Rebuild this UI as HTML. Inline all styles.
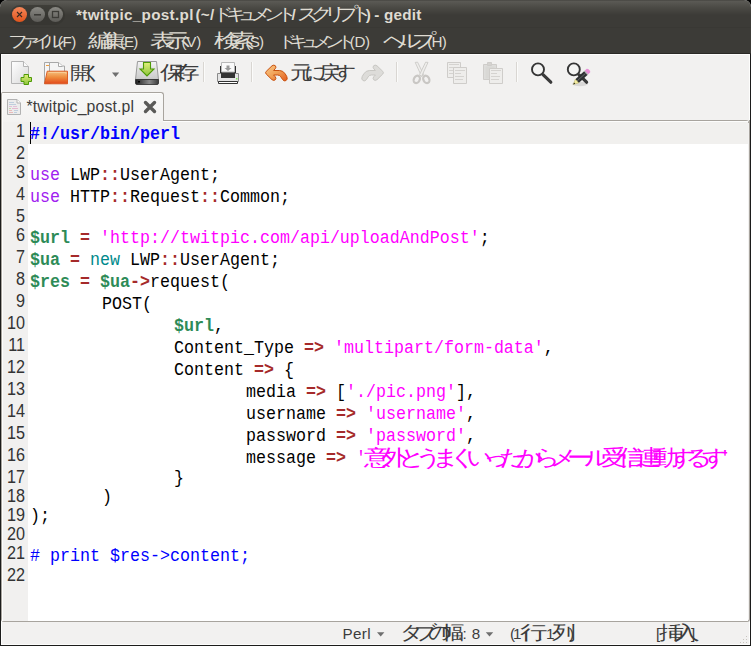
<!DOCTYPE html>
<html><head><meta charset="utf-8">
<style>
html,body{margin:0;padding:0;}
body{width:751px;height:646px;background:#000;position:relative;overflow:hidden;font-family:"Liberation Sans",sans-serif;}
.a{position:absolute;}
.u{position:absolute;white-space:nowrap;line-height:20px;}
.j{font-family:"Liberation Sans",sans-serif;font-weight:normal;line-height:0;}
#win{left:0;top:0;width:751px;height:646px;border-radius:7px 7px 0 0;overflow:hidden;background:#f2f1f0;}
#title{left:0;top:0;width:751px;height:28px;background:linear-gradient(#3f3e3a 0px,#5b5a55 1px,#4a4944 8px,#3c3b37 15px,#3c3b37 27px,#363531 28px);}
#menubar{left:0;top:28px;width:751px;height:26px;background:linear-gradient(#3c3b37 25px,#2a2926 25px);}
#toolbar{left:1px;top:54px;width:749px;height:66px;background:#f2f1f0;}
#status{left:1px;top:622px;width:749px;height:23px;background:#f2f1f0;}
.sep{position:absolute;width:1px;height:20px;background:#d9d6d2;border-right:1px solid #fbfbfa;top:62px;}
.ln{position:absolute;left:0;width:25px;text-align:right;font-family:"Liberation Sans",sans-serif;font-size:16.2px;color:#333;line-height:19px;transform:scaleY(1.12);transform-origin:0 15px;}
.cl{position:absolute;left:30px;font-family:"Liberation Mono",monospace;font-size:16.66px;color:#000;white-space:pre;tab-size:72px;line-height:19px;transform:scaleY(1.13);transform-origin:0 14px;}
.k{color:#0000ff;font-weight:bold}
.p{color:#a020f0}
.o{color:#a52a2a;font-weight:bold}
.v{color:#2e8b57;font-weight:bold}
.s{color:#ff00ff}
.b{color:#008a8c}
.c{color:#0000ff}

.jw{position:absolute;left:0;white-space:nowrap;font-family:"Liberation Sans",sans-serif;}
.jw span{position:absolute;top:0;transform-origin:0 0;font-weight:normal;}

</style></head><body>
<div id="win" class="a"><div id="title" class="a"></div><div id="menubar" class="a"></div><div id="toolbar" class="a"></div><div id="status" class="a"></div></div>
<div class="sep" style="left:203px"></div>
<div class="sep" style="left:251px"></div>
<div class="sep" style="left:396px"></div>
<div class="sep" style="left:516px"></div>
<div class="a" style="left:0;top:54px;width:1px;height:592px;background:#1c1c1b;"></div>
<div class="a" style="left:1px;top:54px;width:1px;height:591px;background:#fdfdfc;"></div>
<div class="a" style="left:750px;top:54px;width:1px;height:592px;background:#1c1c1b;"></div>
<div class="a" style="left:749px;top:54px;width:1px;height:591px;background:#fdfdfc;"></div>
<div class="a" style="left:0;top:645px;width:751px;height:1px;background:#1c1c1b;"></div>
<div class="a" style="left:1px;top:54px;width:749px;height:1px;background:#fdfdfc;"></div>
<div class="a" style="left:1px;top:644px;width:749px;height:1px;background:#fdfdfc;"></div>
<!-- tab -->
<div class="a" style="left:1px;top:92px;width:161px;height:30px;border:1px solid #a8a49e;border-bottom:none;border-radius:2px 3px 0 0;background:linear-gradient(#f8f8f7,#f3f2f1);box-shadow:inset 1px 1px 0 #fdfdfc;"></div>
<!-- notebook frame -->
<div class="a" style="left:1px;top:120px;width:747px;height:501px;border:1px solid #a8a49e;border-top:none;border-radius:0 0 3px 3px;"></div>
<div class="a" style="left:163px;top:120px;width:583px;height:1px;background:#a8a49e;"></div>
<div class="a" style="left:746px;top:120px;width:3px;height:3px;border-top:1px solid #a8a49e;border-right:1px solid #a8a49e;border-radius:0 3px 0 0;box-sizing:border-box;background:#fdfdfc"></div>
<div class="a" style="left:163px;top:121px;width:585px;height:1px;background:#fdfdfc;"></div>
<div class="a" style="left:2px;top:122px;width:746px;height:499px;background:#fff;"></div>
<div class="a" style="left:2px;top:122px;width:1px;height:497px;background:#fdfdfc;"></div>
<div class="a" style="left:3px;top:122px;width:25px;height:499px;background:#f1f0ef;"></div>
<div class="a" style="left:28px;top:122px;width:720px;height:22px;background:#f1f0ee;"></div>
<div class="a" style="left:30px;top:122px;width:1px;height:22px;background:#000;"></div>
<svg class="a" style="left:0;top:0" width="751" height="646" viewBox="0 0 751 646">
<defs>
 <linearGradient id="gClose" x1="0" y1="0" x2="0" y2="1"><stop offset="0" stop-color="#f5875a"/><stop offset="1" stop-color="#e0541c"/></linearGradient>
 <linearGradient id="gGrey" x1="0" y1="0" x2="0" y2="1"><stop offset="0" stop-color="#8a8984"/><stop offset="1" stop-color="#5c5b57"/></linearGradient>
 <linearGradient id="gPage" x1="0" y1="0" x2="1" y2="1"><stop offset="0" stop-color="#ffffff"/><stop offset="1" stop-color="#d8d8d8"/></linearGradient>
 <linearGradient id="gGreen" x1="0" y1="0" x2="0" y2="1"><stop offset="0" stop-color="#e0ef7a"/><stop offset="1" stop-color="#8cc43c"/></linearGradient>
 <linearGradient id="gOrange" x1="0" y1="0" x2="0" y2="1"><stop offset="0" stop-color="#f6c27e"/><stop offset="0.5" stop-color="#ee8a3c"/><stop offset="1" stop-color="#e2481a"/></linearGradient>
 <linearGradient id="gUndo" x1="0" y1="0" x2="1" y2="1"><stop offset="0" stop-color="#fac98a"/><stop offset="0.5" stop-color="#f0a055"/><stop offset="1" stop-color="#e45a1c"/></linearGradient>
 <linearGradient id="gDrive" x1="0" y1="0" x2="0" y2="1"><stop offset="0" stop-color="#f4f4f4"/><stop offset="1" stop-color="#c8c8c8"/></linearGradient>
 <linearGradient id="gDriveB" x1="0" y1="0" x2="1" y2="0"><stop offset="0" stop-color="#1e1e1e"/><stop offset="0.6" stop-color="#8a8a8a"/><stop offset="1" stop-color="#3a3a3a"/></linearGradient>
</defs>
<!-- title buttons -->
<rect x="10" y="5" width="55" height="20" rx="10" fill="#34332f" opacity="0.6"/>
<circle cx="19.5" cy="14.5" r="7.5" fill="url(#gClose)"/>
<path d="M17,12 L22,17 M22,12 L17,17" stroke="#3a2a22" stroke-width="1.1"/>
<circle cx="37.5" cy="14.5" r="7.5" fill="url(#gGrey)"/>
<rect x="34" y="14" width="7" height="1.6" fill="#3c3b37"/>
<circle cx="55.5" cy="14.5" r="7.5" fill="url(#gGrey)"/>
<rect x="52.5" y="11.5" width="6" height="6" fill="none" stroke="#3c3b37" stroke-width="1.3"/>

<!-- new doc -->
<path d="M11.5,61.5 H23.5 L28.5,66.5 V83.5 H11.5 Z" fill="url(#gPage)" stroke="#b4b4b4"/>
<path d="M23.5,61.5 V66.5 H28.5" fill="#fafafa" stroke="#b4b4b4"/>
<path d="M24,74.5 H28.5 V77.5 H31.5 V81.5 H28.5 V84.5 H24 V81.5 H21 V77.5 H24 Z" fill="url(#gGreen)" stroke="#4e9a06"/>

<!-- open -->
<path d="M44.5,62.5 H51 V83.5 H44.5 Z" fill="#f6f6f6" stroke="#a8a8a8"/>
<rect x="46" y="65" width="3" height="1" fill="#f0a040"/>
<path d="M49.5,62.5 H58.5 L62.5,66 H64.5 V75 H49.5 Z" fill="#f4f4f4" stroke="#a8a8a8"/>
<path d="M58.5,62.5 V66.5 H62.5" fill="#fff" stroke="#a8a8a8"/>
<path d="M47.2,71.2 H67.5 V83.8 H44.5 Z" fill="url(#gOrange)" stroke="#d9541a" stroke-width="0.9"/>
<path d="M48.5,72.5 H66 V74" fill="none" stroke="#fbd9a8" stroke-width="0.8" opacity="0.8"/>

<!-- dropdown arrow -->
<path d="M112,72.5 H119.2 L115.6,77 Z" fill="#6f6f6f"/>

<!-- save (drive) -->
<path d="M137.5,61.5 H156.5 L158.5,79.5 H135.5 Z" fill="url(#gDrive)" stroke="#9a9a9a"/>
<ellipse cx="147" cy="72" rx="8" ry="5" fill="none" stroke="#d6d6d6"/>
<path d="M135.5,79.5 H158.5 V83 Q158.5,84.5 157,84.5 H137 Q135.5,84.5 135.5,83 Z" fill="url(#gDriveB)" stroke="#2a2a2a" stroke-width="0.8"/>
<rect x="138" y="81" width="2" height="1.5" fill="#000"/>
<path d="M143.5,62.5 H150.5 V69 H154 L147,76 L140,69 H143.5 Z" fill="url(#gGreen)" stroke="#4e9a06" stroke-width="1.1"/>

<!-- printer -->
<rect x="220" y="66" width="16" height="7" fill="#2e2e2e"/>
<path d="M221.5,62.5 H234.5 V72 H221.5 Z" fill="#fafafa" stroke="#b8b8b8"/>
<path d="M226.5,65.5 H229.5 V68 H231.5 L228,71 L224.5,68 H226.5 Z" fill="#9a9a9a"/>
<path d="M217.5,73.5 H238.5 V81.5 H217.5 Z" fill="#e4e4e4" stroke="#8a8a8a"/>
<rect x="221" y="73" width="14" height="5" fill="#333"/>
<rect x="236" y="78" width="1.5" height="1.5" fill="#7ee05a"/>
<path d="M218.5,81.5 H237.5 V83.5 H218.5 Z" fill="#fff" stroke="#333"/>

<!-- undo -->
<path d="M266.2,71.4 L272,65.8 Q274,64.4 275.4,65.8 Q276.6,67.2 275.2,68.8 L273.6,70.5 H279.6 Q283.2,70.5 285.3,74 L286.8,76.6 Q288,79.4 286,80.6 Q284,81.6 282.6,79.6 L280.8,76.8 Q279.6,75 277.6,75 H273.6 L275.2,76.7 Q276.6,78.3 275.4,79.7 Q274,81.1 272,79.7 L266.2,74 Q264.9,72.7 266.2,71.4 Z" fill="url(#gUndo)" stroke="#c9510f" stroke-width="1" stroke-linejoin="round"/>
<!-- redo disabled -->
<path d="M382.8,71.4 L377,65.8 Q375,64.4 373.6,65.8 Q372.4,67.2 373.8,68.8 L375.4,70.5 H369.4 Q365.8,70.5 363.7,74 L362.2,76.6 Q361,79.4 363,80.6 Q365,81.6 366.4,79.6 L368.2,76.8 Q369.4,75 371.4,75 H375.4 L373.8,76.7 Q372.4,78.3 373.6,79.7 Q375,81.1 377,79.7 L382.8,74 Q384.1,72.7 382.8,71.4 Z" fill="#dddcd9" stroke="#c8c7c3" stroke-width="1" stroke-linejoin="round"/>
<!-- scissors disabled -->
<path d="M415.2,62.4 L417.6,62.2 L423.6,74.6 L421.6,76.4 Z" fill="#efeeec" stroke="#cbc9c6" stroke-width="0.9" stroke-linejoin="round"/>
<path d="M428,62.4 L425.6,62.2 L419.6,74.6 L421.6,76.4 Z" fill="#efeeec" stroke="#cbc9c6" stroke-width="0.9" stroke-linejoin="round"/>
<g fill="none" stroke="#c9c7c4" stroke-width="2.2">
 <ellipse cx="416.8" cy="79.4" rx="2.9" ry="3.9" transform="rotate(28 416.8 79.4)"/>
 <ellipse cx="426.3" cy="79.4" rx="2.9" ry="3.9" transform="rotate(-28 426.3 79.4)"/>
</g>
<!-- copy disabled -->
<path d="M447.5,62.5 H460.5 V77.5 H447.5 Z" fill="#eeedeb" stroke="#cfcdca"/>
<g stroke="#d5d3d0" stroke-width="1"><path d="M449,64.5 H459 M449,67.5 H454 M449,70.5 H453 M449,73.5 H453"/></g>
<path d="M453.5,67.5 H466.5 V83.5 H453.5 Z" fill="#eeedeb" stroke="#cfcdca"/>
<g stroke="#d5d3d0" stroke-width="1"><path d="M455,70.5 H465 M455,73.5 H461 M455,76.5 H464 M455,79.5 H463"/></g>

<!-- paste disabled -->
<path d="M483.5,64.5 H496.5 V79.5 H483.5 Z" fill="#dedddb" stroke="#cfcdca"/>
<path d="M485.5,66.5 H494.5 V78.5 H485.5 Z" fill="#d9d8d5"/>
<path d="M487.5,62.5 H491.5 V65.5 H487.5 Z" fill="#d5d3d0" stroke="#cfcdca"/>
<path d="M489.5,68.5 H502.5 V83.5 H489.5 Z" fill="#eeedeb" stroke="#cfcdca"/>
<g stroke="#d5d3d0" stroke-width="1"><path d="M491,70.5 H501 M491,73.5 H497 M491,76.5 H500 M491,79.5 H499"/></g>

<!-- find -->
<circle cx="538" cy="69.4" r="6.0" fill="#f4f4f3" stroke="#353535" stroke-width="1.9"/>
<path d="M543,74.6 L550.8,82.2" stroke="#3a3a3a" stroke-width="3.2" stroke-linecap="round"/>
<!-- find replace -->
<circle cx="573.8" cy="69.4" r="6.0" fill="#f4f4f3" stroke="#353535" stroke-width="1.9"/>
<path d="M578.8,74.6 L586.6,82.2" stroke="#3a3a3a" stroke-width="3.2" stroke-linecap="round"/>
<ellipse cx="580" cy="84" rx="8" ry="2.2" fill="#000" opacity="0.10"/>
<path d="M575.33,79.19 L584.11,71.23 L587.47,74.94 L578.68,82.90 Z" fill="#2e3032"/>
<path d="M577.01,81.04 L585.79,73.09" stroke="#6a6c6e" stroke-width="0.9"/>
<path d="M584.11,71.23 L584.85,70.56 L588.21,74.27 L587.47,74.94 Z" fill="#9a9a9a"/>
<path d="M584.85,70.56 L586.78,68.82 L588.19,68.89 L590.21,71.11 L590.14,72.52 L588.21,74.27 Z" fill="#e88fd6"/>
<path d="M573.30,84.40 L575.33,79.19 L578.68,82.90 Z" fill="#f3eca0" stroke="#b5ac5c" stroke-width="0.5"/>
<path d="M573.30,84.40 L574.03,82.52 L575.24,83.86 Z" fill="#1a1a1a"/>

<!-- tab page icon -->
<path d="M7.5,99.5 H17 L20.5,103 V114.5 H7.5 Z" fill="#ececec" stroke="#b2b2b2"/>
<path d="M17,99.5 V103 H20.5" fill="#fff" stroke="#b2b2b2"/>
<g stroke-width="1" opacity="0.55">
 <path d="M9,102.5 H14" stroke="#9bb7d4"/>
 <path d="M9,104.5 H16" stroke="#9bb7d4"/>
 <path d="M9,106.5 H12 M13,106.5 H17" stroke="#d7a0c8"/>
 <path d="M9,108.5 H11" stroke="#a0c878"/><path d="M12,108.5 H18" stroke="#e090b8"/>
 <path d="M9,110.5 H12" stroke="#e89090"/><path d="M14,110.5 H18" stroke="#9bb7d4"/>
 <path d="M9,112.5 H13" stroke="#e89090"/><path d="M14,112.5 H17" stroke="#9bb7d4"/>
</g>
<!-- tab close -->
<path d="M145.5,102.5 L154.5,111.5 M154.5,102.5 L145.5,111.5" stroke="#5a5a58" stroke-width="3.4" stroke-linecap="round"/>

<!-- status arrows -->
<path d="M377,632.3 H384.4 L380.7,636.6 Z" fill="#6f6f6f"/>
<path d="M485.8,632.3 H493.2 L489.5,636.6 Z" fill="#6f6f6f"/>
<!-- resize grip -->
<g fill="#c8c5c0">
 <rect x="746" y="636" width="1" height="1"/><rect x="743" y="639" width="1" height="1"/><rect x="746" y="639" width="1" height="1"/>
 <rect x="740" y="642" width="1" height="1"/><rect x="743" y="642" width="1" height="1"/><rect x="746" y="642" width="1" height="1"/>
</g>
</svg>

<div class="u" id="p0" style="left:76.00px;top:5px;font-size:15.25px;color:#dfdbd2;font-weight:bold;letter-spacing:0.313px">*twitpic_post.pl</div>
<div class="u" id="p1" style="left:195.40px;top:5px;font-size:15.25px;color:#dfdbd2;font-weight:bold;letter-spacing:0.300px">(~/</div>
<div class="jw" id="p2" style="top:4px;font-size:17.45px;line-height:20px;color:#dfdbd2;font-weight:bold;"><span style="transform:scaleX(1.175);left:212.95px">ド</span><span style="transform:scaleX(1.175);left:225.70px">キ</span><span style="transform:scaleX(1.175);left:238.45px">ュ</span><span style="transform:scaleX(1.175);left:251.20px">メ</span><span style="transform:scaleX(1.175);left:263.95px">ン</span><span style="transform:scaleX(1.175);left:276.70px">ト</span></div>
<div class="u" id="p3" style="left:291.60px;top:5px;font-size:15.25px;color:#dfdbd2;font-weight:bold;letter-spacing:0.000px">/</div>
<div class="jw" id="p4" style="top:3px;font-size:18.43px;line-height:21px;color:#dfdbd2;font-weight:bold;"><span style="transform:scaleX(1.175);left:297.13px">ス</span><span style="transform:scaleX(1.175);left:310.51px">ク</span><span style="transform:scaleX(1.175);left:323.89px">リ</span><span style="transform:scaleX(1.175);left:337.27px">プ</span><span style="transform:scaleX(1.175);left:350.65px">ト</span></div>
<div class="u" id="p5" style="left:365.80px;top:5px;font-size:15.25px;color:#dfdbd2;font-weight:bold;letter-spacing:0.000px">)</div>
<div class="u" id="p6" style="left:374.30px;top:5px;font-size:15.25px;color:#dfdbd2;font-weight:bold;letter-spacing:0.200px">- gedit</div>
<div class="jw" id="p7" style="top:32px;font-size:16.93px;line-height:19px;color:#dfdbd2;"><span style="transform:scaleX(1.175);left:7.61px">フ</span><span style="transform:scaleX(1.175);left:19.77px">ァ</span><span style="transform:scaleX(1.175);left:31.93px">イ</span><span style="transform:scaleX(1.175);left:44.09px">ル</span></div>
<div class="u" id="p8" style="left:57.80px;top:32px;font-size:15.2px;color:#dfdbd2;letter-spacing:-0.400px">(F)</div>
<div class="jw" id="p9" style="top:30px;font-size:19.30px;line-height:21px;color:#dfdbd2;"><span style="transform:scaleX(1.345);left:88.00px">編</span><span style="transform:scaleX(1.345);left:102.45px">集</span></div>
<div class="u" id="p10" style="left:120.00px;top:32px;font-size:15.2px;color:#dfdbd2;letter-spacing:-1.000px">(E)</div>
<div class="jw" id="p11" style="top:30px;font-size:19.30px;line-height:21px;color:#dfdbd2;"><span style="transform:scaleX(1.345);left:150.30px">表</span><span style="transform:scaleX(1.345);left:164.75px">示</span></div>
<div class="u" id="p12" style="left:181.40px;top:32px;font-size:15.2px;color:#dfdbd2;letter-spacing:-0.200px">(V)</div>
<div class="jw" id="p13" style="top:30px;font-size:19.30px;line-height:21px;color:#dfdbd2;"><span style="transform:scaleX(1.387);left:213.72px">検</span><span style="transform:scaleX(1.387);left:228.63px">索</span></div>
<div class="u" id="p14" style="left:245.50px;top:32px;font-size:15.2px;color:#dfdbd2;letter-spacing:-0.900px">(S)</div>
<div class="jw" id="p15" style="top:32px;font-size:16.17px;line-height:18px;color:#dfdbd2;"><span style="transform:scaleX(1.175);left:277.60px">ド</span><span style="transform:scaleX(1.175);left:289.42px">キ</span><span style="transform:scaleX(1.175);left:301.23px">ュ</span><span style="transform:scaleX(1.175);left:313.04px">メ</span><span style="transform:scaleX(1.175);left:324.86px">ン</span><span style="transform:scaleX(1.175);left:336.67px">ト</span></div>
<div class="u" id="p16" style="left:349.80px;top:32px;font-size:15.2px;color:#dfdbd2;letter-spacing:-0.400px">(D)</div>
<div class="jw" id="p17" style="top:30px;font-size:19.30px;line-height:21px;color:#dfdbd2;"><span style="transform:scaleX(1.260);left:382.57px">ヘ</span><span style="transform:scaleX(1.260);left:397.10px">ル</span><span style="transform:scaleX(1.260);left:411.62px">プ</span></div>
<div class="u" id="p18" style="left:427.20px;top:32px;font-size:15.2px;color:#dfdbd2;letter-spacing:-0.700px">(H)</div>
<div class="jw" id="p19" style="top:63px;font-size:17.55px;line-height:20px;color:#3c3c3c;"><span style="transform:scaleX(1.175);left:69.74px">開</span><span style="transform:scaleX(1.175);left:81.22px">く</span></div>
<div class="jw" id="p20" style="top:62px;font-size:19.30px;line-height:21px;color:#3c3c3c;"><span style="transform:scaleX(1.359);left:159.58px">保</span><span style="transform:scaleX(1.359);left:174.18px">存</span></div>
<div class="jw" id="p21" style="top:62px;font-size:19.30px;line-height:21px;color:#3c3c3c;"><span style="transform:scaleX(1.216);left:289.55px">元</span><span style="transform:scaleX(1.216);left:303.89px">に</span><span style="transform:scaleX(1.216);left:318.23px">戻</span><span style="transform:scaleX(1.216);left:332.57px">す</span></div>
<div class="u" id="p22" style="left:26.40px;top:97px;font-size:15.8px;color:#3c3c3c;letter-spacing:0.153px">*twitpic_post.pl</div>
<div class="jw" id="p23" style="top:445px;font-size:21.80px;line-height:25px;color:#ff00ff;"><span style="transform:scaleX(1.223);left:364.13px">意</span><span style="transform:scaleX(1.223);left:381.05px">外</span><span style="transform:scaleX(1.223);left:397.96px">と</span><span style="transform:scaleX(1.223);left:414.87px">う</span><span style="transform:scaleX(1.223);left:431.79px">ま</span><span style="transform:scaleX(1.223);left:448.70px">く</span><span style="transform:scaleX(1.223);left:465.61px">い</span><span style="transform:scaleX(1.223);left:482.52px">っ</span><span style="transform:scaleX(1.223);left:499.44px">た</span><span style="transform:scaleX(1.223);left:516.35px">か</span><span style="transform:scaleX(1.223);left:533.26px">ら</span><span style="transform:scaleX(1.223);left:550.18px">メ</span><span style="transform:scaleX(1.223);left:567.09px">ー</span><span style="transform:scaleX(1.223);left:584.00px">ル</span><span style="transform:scaleX(1.223);left:600.92px">受</span><span style="transform:scaleX(1.223);left:617.83px">信</span><span style="transform:scaleX(1.223);left:634.74px">連</span><span style="transform:scaleX(1.223);left:651.66px">動</span><span style="transform:scaleX(1.223);left:668.57px">す</span><span style="transform:scaleX(1.223);left:685.48px">る</span><span style="transform:scaleX(1.223);left:702.39px">す</span></div>
<div class="u" id="p24" style="left:342.40px;top:624px;font-size:15.2px;color:#3c3c3c;letter-spacing:0.433px">Perl</div>
<div class="jw" id="p25" style="top:622px;font-size:19.30px;line-height:21px;color:#3c3c3c;"><span style="transform:scaleX(1.196);left:399.69px">タ</span><span style="transform:scaleX(1.196);left:413.80px">ブ</span><span style="transform:scaleX(1.196);left:427.91px">の</span><span style="transform:scaleX(1.196);left:442.02px">幅</span></div>
<div class="u" id="p26" style="left:458.00px;top:624px;font-size:15.2px;color:#3c3c3c;letter-spacing:0.333px">:: 8</div>
<div class="u" id="p27" style="left:509.90px;top:624px;font-size:15.2px;color:#3c3c3c;letter-spacing:-1.900px">(1</div>
<div class="jw" id="p28" style="top:622px;font-size:19.30px;line-height:21px;color:#3c3c3c;"><span style="transform:scaleX(1.450);left:520.32px">行</span></div>
<div class="jw" id="p29" style="top:629px;font-size:10.93px;line-height:12px;color:#3c3c3c;"><span style="left:538.41px">、</span></div>
<div class="u" id="p30" style="left:546.00px;top:624px;font-size:15.2px;color:#3c3c3c;letter-spacing:0.000px">1</div>
<div class="jw" id="p31" style="top:622px;font-size:19.30px;line-height:21px;color:#3c3c3c;"><span style="transform:scaleX(1.255);left:552.08px">列</span></div>
<div class="u" id="p32" style="left:568.90px;top:624px;font-size:15.2px;color:#3c3c3c;letter-spacing:0.000px">)</div>
<div class="u" id="p33" style="left:656.00px;top:624px;font-size:15.2px;color:#3c3c3c;letter-spacing:0.000px">[</div>
<div class="jw" id="p34" style="top:622px;font-size:19.30px;line-height:21px;color:#3c3c3c;"><span style="transform:scaleX(1.350);left:659.20px">挿</span><span style="transform:scaleX(1.350);left:673.69px">入</span></div>
<div class="u" id="p35" style="left:691.10px;top:624px;font-size:15.2px;color:#3c3c3c;letter-spacing:0.000px">]</div>
<div class="ln" style="top:122px">1</div>
<div class="cl" style="top:125px"><span class="k">#!/usr/bin/perl</span></div>
<div class="ln" style="top:144px">2</div>
<div class="ln" style="top:163px">3</div>
<div class="cl" style="top:166px"><span class="p">use</span> LWP<span class="o">::</span>UserAgent;</div>
<div class="ln" style="top:185px">4</div>
<div class="cl" style="top:188px"><span class="p">use</span> HTTP<span class="o">::</span>Request<span class="o">::</span>Common;</div>
<div class="ln" style="top:207px">5</div>
<div class="ln" style="top:226px">6</div>
<div class="cl" style="top:229px"><span class="v">$url</span> <span class="o">=</span> <span class="s">&#x27;http://twitpic.com/api/uploadAndPost&#x27;</span>;</div>
<div class="ln" style="top:248px">7</div>
<div class="cl" style="top:251px"><span class="v">$ua</span> <span class="o">=</span> <span class="b">new</span> LWP<span class="o">::</span>UserAgent;</div>
<div class="ln" style="top:270px">8</div>
<div class="cl" style="top:273px"><span class="v">$res</span> <span class="o">=</span> <span class="v">$ua</span><span class="o">-&gt;</span>request(</div>
<div class="ln" style="top:292px">9</div>
<div class="cl" style="top:295px">	POST(</div>
<div class="ln" style="top:314px">10</div>
<div class="cl" style="top:317px">		<span class="v">$url</span>,</div>
<div class="ln" style="top:336px">11</div>
<div class="cl" style="top:339px">		Content_Type <span class="o">=&gt;</span> <span class="s">&#x27;multipart/form-data&#x27;</span>,</div>
<div class="ln" style="top:358px">12</div>
<div class="cl" style="top:361px">		Content <span class="o">=&gt;</span> {</div>
<div class="ln" style="top:380px">13</div>
<div class="cl" style="top:383px">			media <span class="o">=&gt;</span> [<span class="s">&#x27;./pic.png&#x27;</span>],</div>
<div class="ln" style="top:402px">14</div>
<div class="cl" style="top:405px">			username <span class="o">=&gt;</span> <span class="s">&#x27;username&#x27;</span>,</div>
<div class="ln" style="top:424px">15</div>
<div class="cl" style="top:427px">			password <span class="o">=&gt;</span> <span class="s">&#x27;password&#x27;</span>,</div>
<div class="ln" style="top:446px">16</div>
<div class="cl" style="top:449px">			message <span class="o">=&gt;</span> <span class="s">&#x27;</span></div>
<div class="ln" style="top:468px">17</div>
<div class="cl" style="top:469px">		}</div>
<div class="ln" style="top:487px">18</div>
<div class="cl" style="top:488px">	)</div>
<div class="ln" style="top:506px">19</div>
<div class="cl" style="top:507px">);</div>
<div class="ln" style="top:525px">20</div>
<div class="ln" style="top:544px">21</div>
<div class="cl" style="top:547px"><span class="c"># print $res-&gt;content;</span></div>
<div class="ln" style="top:566px">22</div>
<div class="cl s" style="left:720px;top:449px">'</div>
</body></html>
